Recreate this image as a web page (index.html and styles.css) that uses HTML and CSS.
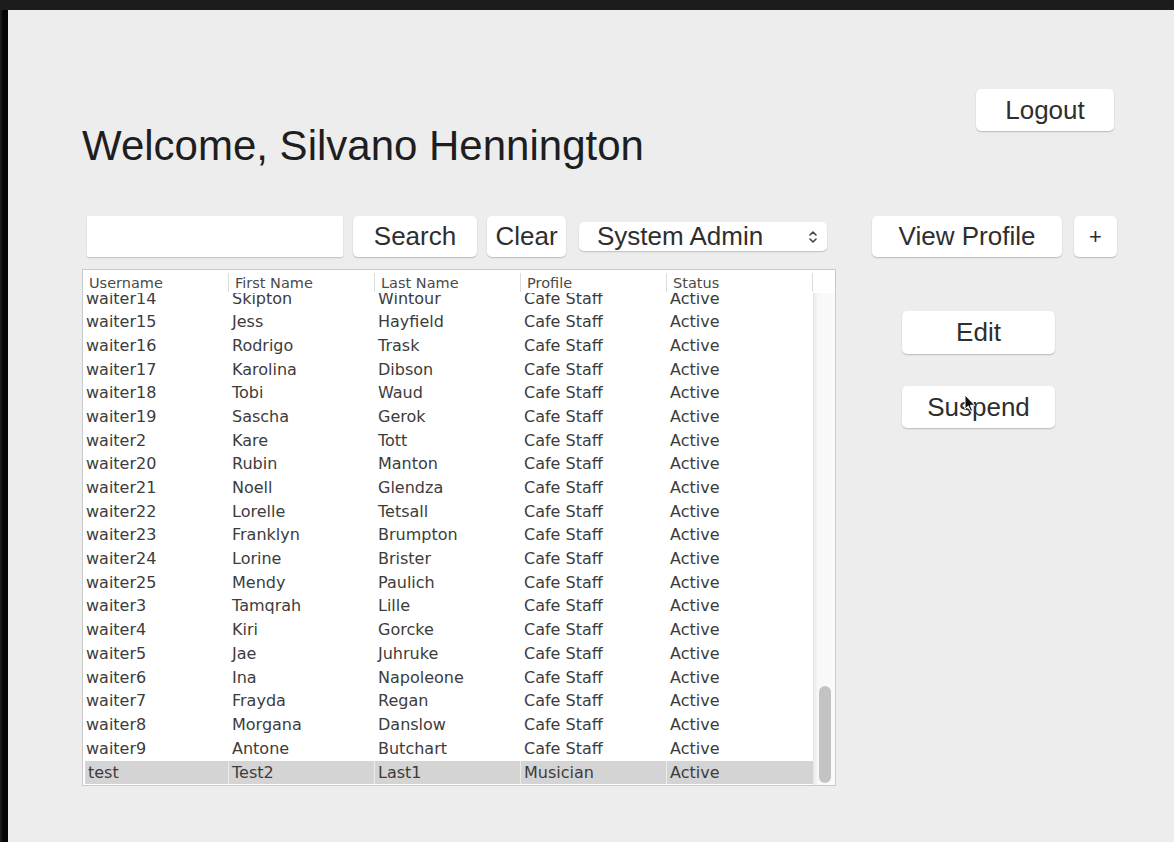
FILE: index.html
```html
<!DOCTYPE html>
<html>
<head>
<meta charset="utf-8">
<title>Admin</title>
<link rel="stylesheet" href="styles.css">
</head>
<body>
<div class="topbar"></div>
<div class="frame">
  <div class="strip"></div>
  <div class="content">
    <div class="header">
      <h1 class="title">Welcome, Silvano Hennington</h1>
      <button class="btn logout">Logout</button>
    </div>
    <div class="toolbar">
      <input class="field" type="text">
      <button class="btn search">Search</button>
      <button class="btn clear">Clear</button>
      <div class="select">
        <span>System Admin</span>
        <svg class="chev" width="10" height="16" viewBox="0 0 10 16"><path d="M2 6 L5 3 L8 6 M2 10 L5 13 L8 10" fill="none" stroke="#444" stroke-width="1.6" stroke-linecap="round" stroke-linejoin="round"/></svg>
      </div>
      <button class="btn view">View Profile</button>
      <button class="btn plus">+</button>
    </div>
    <div class="main">
      <div class="table">
        <div class="thead">
          <div class="th">Username</div>
          <div class="th">First Name</div>
          <div class="th">Last Name</div>
          <div class="th">Profile</div>
          <div class="th">Status</div>
          <div class="th corner"></div>
        </div>
        <div class="tbody">
          <div class="rows-clip">
            <div class="rows">
              <div class="row"><div>waiter14</div><div>Skipton</div><div>Wintour</div><div>Cafe Staff</div><div>Active</div></div>
              <div class="row"><div>waiter15</div><div>Jess</div><div>Hayfield</div><div>Cafe Staff</div><div>Active</div></div>
              <div class="row"><div>waiter16</div><div>Rodrigo</div><div>Trask</div><div>Cafe Staff</div><div>Active</div></div>
              <div class="row"><div>waiter17</div><div>Karolina</div><div>Dibson</div><div>Cafe Staff</div><div>Active</div></div>
              <div class="row"><div>waiter18</div><div>Tobi</div><div>Waud</div><div>Cafe Staff</div><div>Active</div></div>
              <div class="row"><div>waiter19</div><div>Sascha</div><div>Gerok</div><div>Cafe Staff</div><div>Active</div></div>
              <div class="row"><div>waiter2</div><div>Kare</div><div>Tott</div><div>Cafe Staff</div><div>Active</div></div>
              <div class="row"><div>waiter20</div><div>Rubin</div><div>Manton</div><div>Cafe Staff</div><div>Active</div></div>
              <div class="row"><div>waiter21</div><div>Noell</div><div>Glendza</div><div>Cafe Staff</div><div>Active</div></div>
              <div class="row"><div>waiter22</div><div>Lorelle</div><div>Tetsall</div><div>Cafe Staff</div><div>Active</div></div>
              <div class="row"><div>waiter23</div><div>Franklyn</div><div>Brumpton</div><div>Cafe Staff</div><div>Active</div></div>
              <div class="row"><div>waiter24</div><div>Lorine</div><div>Brister</div><div>Cafe Staff</div><div>Active</div></div>
              <div class="row"><div>waiter25</div><div>Mendy</div><div>Paulich</div><div>Cafe Staff</div><div>Active</div></div>
              <div class="row"><div>waiter3</div><div>Tamqrah</div><div>Lille</div><div>Cafe Staff</div><div>Active</div></div>
              <div class="row"><div>waiter4</div><div>Kiri</div><div>Gorcke</div><div>Cafe Staff</div><div>Active</div></div>
              <div class="row"><div>waiter5</div><div>Jae</div><div>Juhruke</div><div>Cafe Staff</div><div>Active</div></div>
              <div class="row"><div>waiter6</div><div>Ina</div><div>Napoleone</div><div>Cafe Staff</div><div>Active</div></div>
              <div class="row"><div>waiter7</div><div>Frayda</div><div>Regan</div><div>Cafe Staff</div><div>Active</div></div>
              <div class="row"><div>waiter8</div><div>Morgana</div><div>Danslow</div><div>Cafe Staff</div><div>Active</div></div>
              <div class="row"><div>waiter9</div><div>Antone</div><div>Butchart</div><div>Cafe Staff</div><div>Active</div></div>
              <div class="row selected"><div>test</div><div>Test2</div><div>Last1</div><div>Musician</div><div>Active</div></div>
            </div>
          </div>
          <div class="scroll"><div class="thumb"></div></div>
        </div>
      </div>
      <div class="side">
        <button class="btn side-btn edit">Edit</button>
        <button class="btn side-btn suspend">Suspend
          <svg class="cursor" width="12" height="19" viewBox="0 0 12 19"><path d="M1 1 L1 15 L4.3 12 L6.6 17.3 L8.6 16.4 L6.4 11.3 L10.8 11.3 Z" fill="#111" stroke="#fff" stroke-width="1" stroke-linejoin="round"/></svg>
        </button>
      </div>
    </div>
  </div>
</div>
</body>
</html>
```

FILE: styles.css
```css
html, body {
  margin: 0;
  padding: 0;
  height: 100%;
  overflow: hidden;
  background: #ededed;
  font-family: "Liberation Sans", Arial, sans-serif;
}

.topbar {
  height: 10px;
  background: #1c1c1c;
}

.frame {
  display: flex;
  height: 832px;
}

.strip {
  width: 6px;
  border-left: 2px solid #1a1a1a;
  background: #050505;
}

.content {
  flex: 1;
  padding: 79px 0 0 74px;
}

.header {
  display: flex;
  justify-content: space-between;
  align-items: flex-start;
  width: 1032px;
}

.title {
  margin: 33px 0 0 0;
  font-size: 42px;
  line-height: 48px;
  font-weight: normal;
  color: #1e1e1e;
}

.btn {
  display: flex;
  align-items: center;
  justify-content: center;
  padding: 0;
  border: none;
  border-radius: 5px;
  background: #ffffff;
  box-shadow: 0 1px 1.5px rgba(0, 0, 0, 0.22);
  font-family: "Liberation Sans", Arial, sans-serif;
  font-size: 26px;
  color: #2e2e2e;
}

.logout {
  width: 138px;
  height: 42px;
}

.toolbar {
  display: flex;
  align-items: center;
  gap: 10px;
  margin: 46px 0 0 5px;
  height: 41px;
}

.field {
  width: 256px;
  height: 41px;
  box-sizing: border-box;
  border: none;
  border-radius: 2px;
  background: #fff;
  box-shadow: 0 1px 1.5px rgba(0, 0, 0, 0.2);
  margin: 0;
  padding: 0 8px;
  font-size: 20px;
}

.search {
  width: 124px;
  height: 41px;
}

.clear {
  width: 79px;
  height: 41px;
}

.select {
  margin-left: 3px;
  width: 248px;
  height: 29px;
  box-sizing: border-box;
  display: flex;
  align-items: center;
  justify-content: space-between;
  padding: 0 9px 0 18px;
  background: #fff;
  border-radius: 5px;
  box-shadow: 0 1px 1.5px rgba(0, 0, 0, 0.2);
  font-size: 26px;
  color: #2e2e2e;
}

.chev {
  display: block;
}

.view {
  margin-left: 35px;
  width: 190px;
  height: 41px;
}

.plus {
  margin-left: 2px;
  width: 43px;
  height: 41px;
  font-size: 22px;
}

.main {
  display: flex;
  align-items: flex-start;
  margin-top: 12px;
}

.table {
  width: 754px;
  height: 517px;
  box-sizing: border-box;
  border: 1px solid #cacaca;
  background: #fff;
  display: flex;
  flex-direction: column;
  font-family: "DejaVu Sans", Verdana, sans-serif;
}

.thead {
  display: grid;
  grid-template-columns: repeat(5, 146px) 22px;
  height: 23px;
  flex: none;
  background: #fff;
}

.th {
  box-sizing: border-box;
  padding: 2px 0 0 6px;
  margin-top: 3px;
  height: 19px;
  font-size: 14.5px;
  line-height: 16px;
  color: #4a4a4a;
  border-right: 1px solid #dcdcdc;
}

.th.corner {
  border-right: none;
}

.tbody {
  flex: 1;
  display: flex;
  min-height: 0;
}

.rows-clip {
  width: 730px;
  overflow: hidden;
}

.rows {
  margin-top: -6.5px;
}

.row {
  display: grid;
  grid-template-columns: repeat(5, 146px);
  height: 23.7px;
  line-height: 23.7px;
  font-size: 16px;
  color: #3c3c3c;
}

.row > div {
  padding-left: 3px;
  white-space: nowrap;
  overflow: hidden;
}

.row.selected {
  margin-left: 2px;
  grid-template-columns: 144px repeat(3, 146px) 146px;
}

.row.selected > div {
  background: #d4d4d4;
  border-right: 1px solid #ececec;
  margin-top: 1px;
}

.row.selected > div:last-child {
  border-right: none;
}

.scroll {
  width: 22px;
  flex: none;
  background: linear-gradient(to right, #ececec, #f8f8f8 20%, #fafafa);
  border-left: 1px solid #e6e6e6;
  display: flex;
  flex-direction: column;
  justify-content: flex-end;
  align-items: center;
  padding-bottom: 2px;
  box-sizing: border-box;
}

.thumb {
  width: 12px;
  height: 97px;
  border-radius: 6px;
  background: #c3c3c3;
}

.side {
  display: flex;
  flex-direction: column;
  gap: 32px;
  margin-left: 66px;
  padding-top: 42px;
}

.side-btn {
  width: 153px;
  height: 43px;
}

.suspend {
  height: 42px;
  position: relative;
}

.cursor {
  position: absolute;
  left: 62px;
  top: 8px;
}
```
